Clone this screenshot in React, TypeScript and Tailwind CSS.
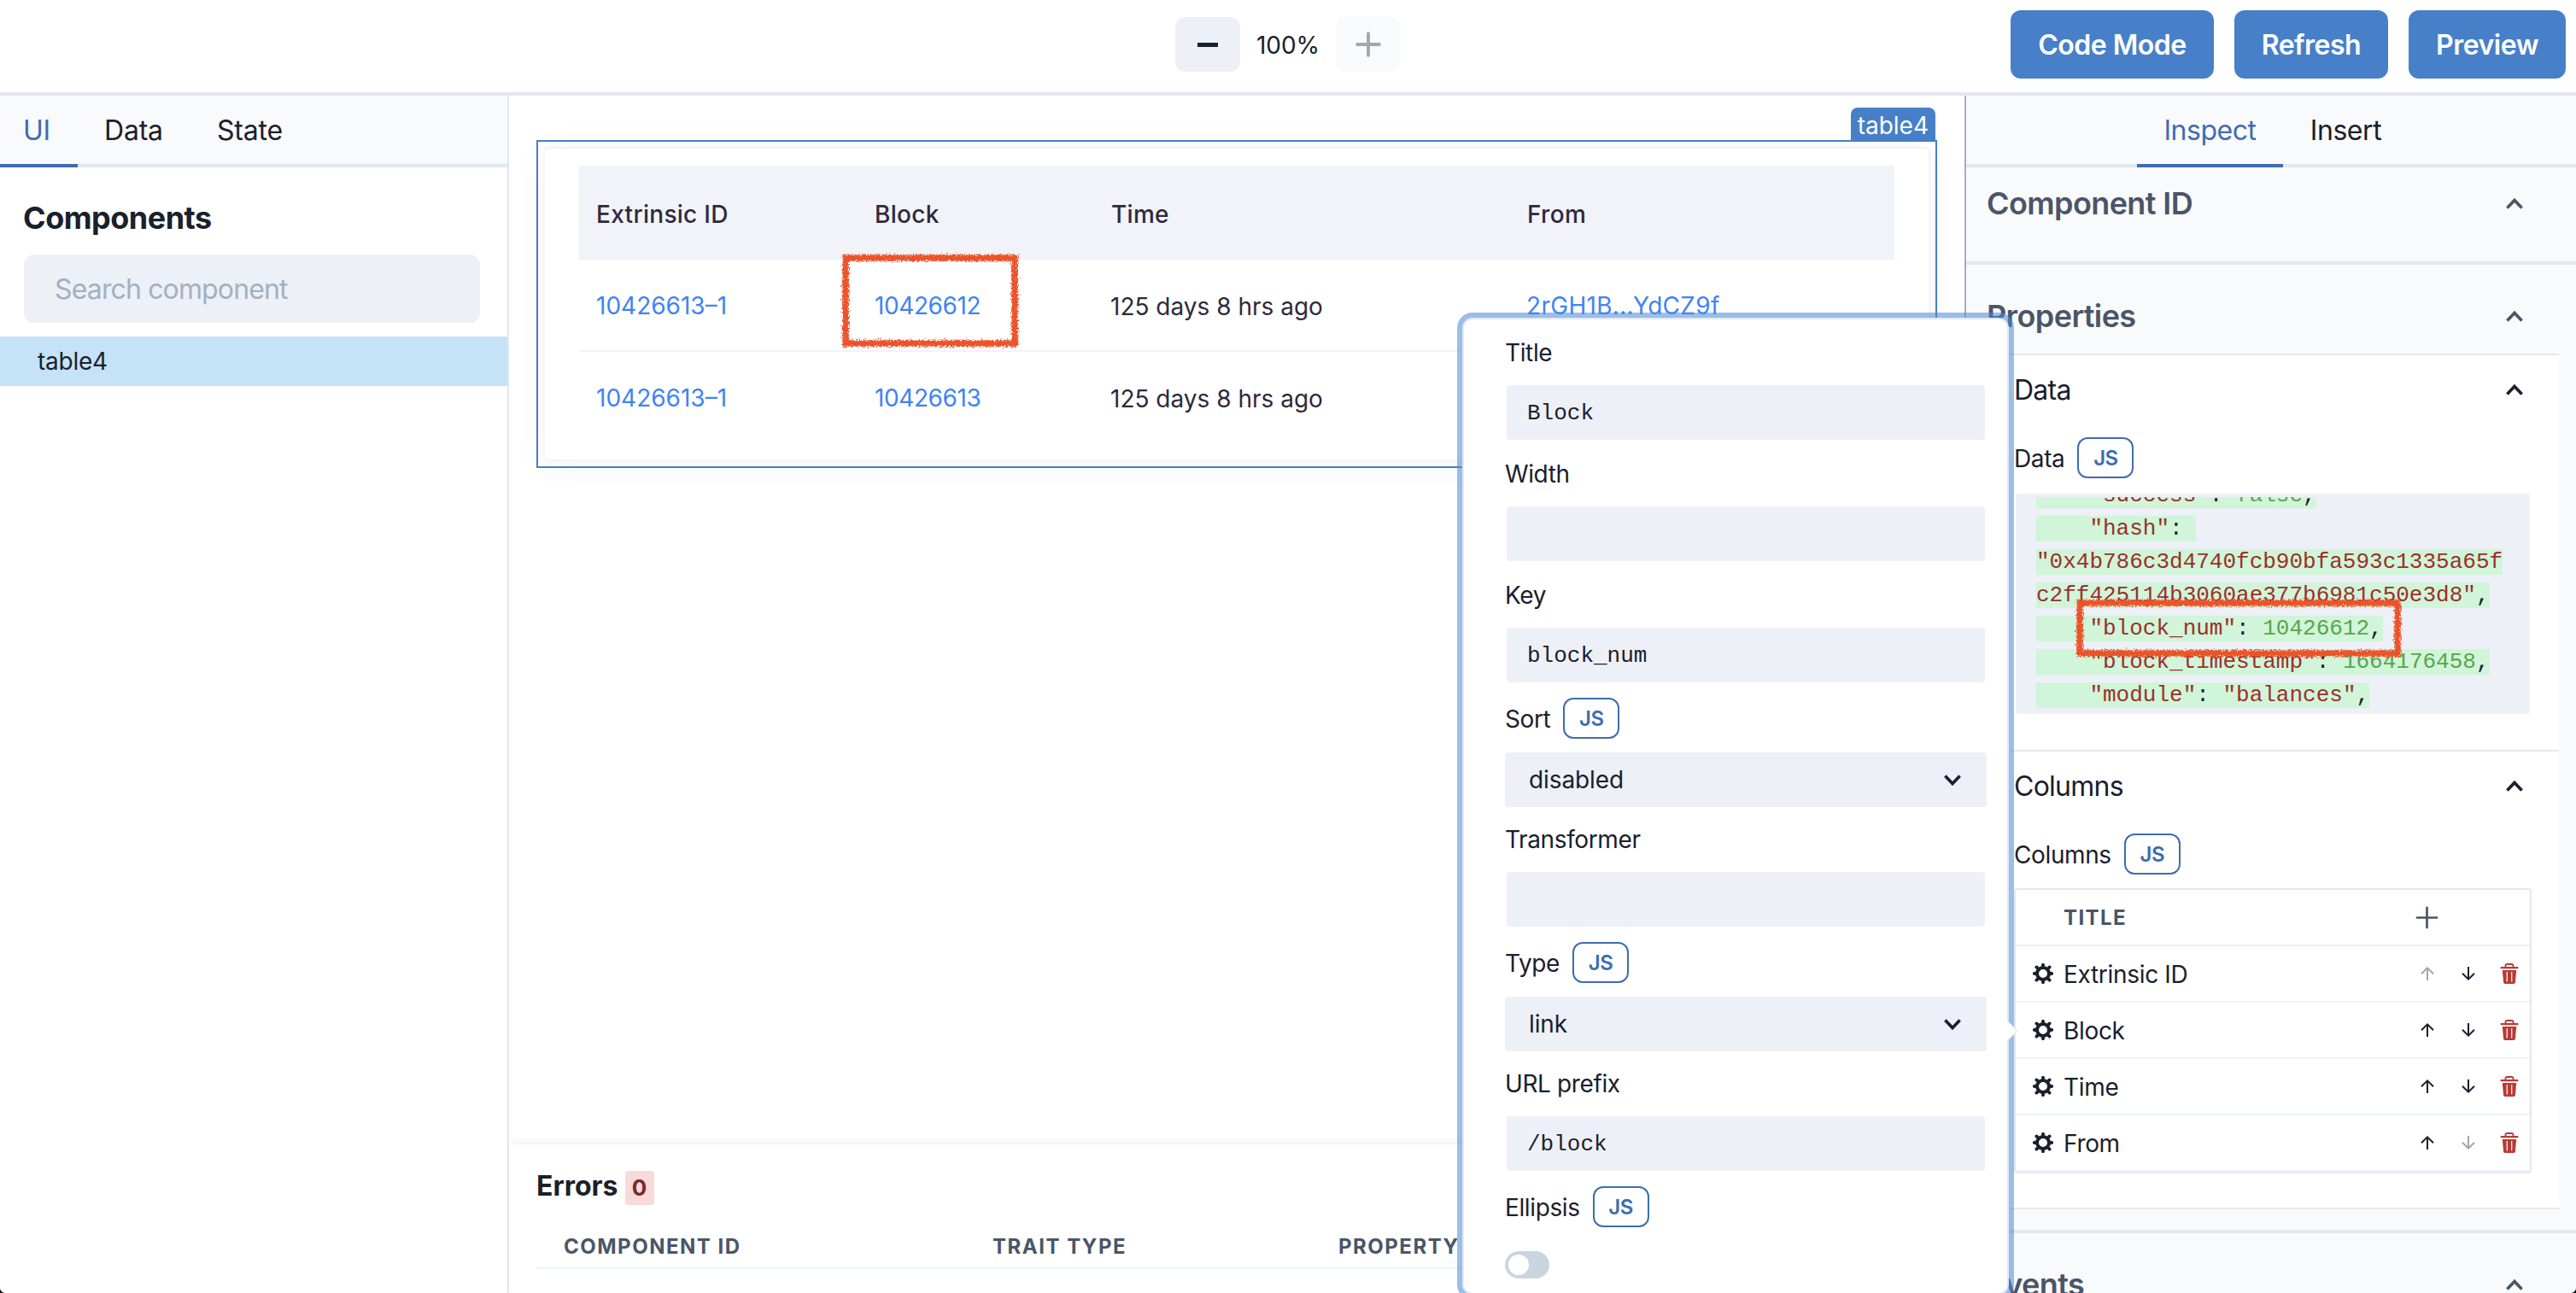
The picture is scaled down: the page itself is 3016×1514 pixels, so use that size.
import { ReactNode } from "react";
import clsx from "clsx";

const tableRows = [
  { id: "10426613–1", block: "10426612", time: "125 days 8 hrs ago", from: "2rGH1B...YdCZ9f" },
  { id: "10426613–1", block: "10426613", time: "125 days 8 hrs ago", from: "" },
];

const columns = ["Extrinsic ID", "Block", "Time", "From"];

function Chevron({ down, className }: { down?: boolean; className?: string }) {
  return (
    <svg width="20" height="13" viewBox="0 0 20 13" fill="none" className={clsx(down && "rotate-180", className)}>
      <path d="M1.4 11.4 L10 2.4 L18.6 11.4" stroke="currentColor" strokeWidth="3.6" />
    </svg>
  );
}

function GearIcon() {
  return (
    <svg width="24" height="24" viewBox="0 0 24 24" fill="none" stroke="currentColor">
      <circle cx="12" cy="12" r="7" strokeWidth="4" />
      <path
        d="M12 1.8V5 M12 19V22.2 M1.8 12H5 M19 12H22.2 M4.4 4.4L7 7 M17 17L19.6 19.6 M4.4 19.6L7 17 M17 7L19.6 4.4"
        strokeWidth="3.8"
        strokeLinecap="round"
      />
    </svg>
  );
}

function ArrowIcon({ down, disabled }: { down?: boolean; disabled?: boolean }) {
  return (
    <svg
      width="16"
      height="16"
      viewBox="0 0 16 16"
      fill="none"
      stroke="currentColor"
      strokeWidth="2"
      className={clsx(down && "rotate-180", disabled && "text-[#a4a5a9]")}
    >
      <path d="M8 16V1.5 M1 8.2L8 1.4L15 8.2" />
    </svg>
  );
}

function TrashIcon() {
  return (
    <svg width="22" height="24" viewBox="0 0 22 24" fill="none" className="text-[#b83a34]">
      <path d="M6.5 4V2.8Q6.5 1 8.3 1H13.7Q15.5 1 15.5 2.8V4" stroke="currentColor" strokeWidth="1.8" />
      <rect x="0.5" y="4" width="21" height="2.2" rx="1" fill="currentColor" />
      <path d="M2.8 8H19.2L17.9 22.2Q17.7 24 16 24H6Q4.3 24 4.1 22.2Z" fill="currentColor" />
      <path d="M8.3 10V21.5 M13.7 10V21.5" stroke="#f7dedd" strokeWidth="1.4" />
    </svg>
  );
}

function PlusIcon({ size, stroke }: { size: number; stroke: number }) {
  return (
    <svg width={size} height={size} viewBox="0 0 28 28" stroke="currentColor" strokeWidth={stroke} strokeLinecap="round">
      <path d="M14 2V26 M2 14H26" />
    </svg>
  );
}

function JsButton() {
  return (
    <button className="flex h-12 w-[66px] items-center justify-center rounded-xl border-[2.5px] border-[#3e6db0] pt-0.5 text-2xl font-semibold tracking-[-0.5px] text-[#3e6db0]">
      JS
    </button>
  );
}

function Label({ children, js }: { children: ReactNode; js?: boolean }) {
  return (
    <div className={clsx("flex items-center gap-[15px]", js ? "h-12" : "h-[42px]")}>
      <span className="pt-px text-[28px] tracking-[-0.38px]">{children}</span>
      {js && <JsButton />}
    </div>
  );
}

function Editor({ value }: { value: string }) {
  return (
    <div className="mx-0.5 my-[18px] flex h-16 items-center rounded bg-[#edf0f6] px-6 pt-0.5 font-['Liberation_Mono',monospace] text-[26px]">
      {value}
    </div>
  );
}

function Select({ value }: { value: string }) {
  return (
    <div className="my-4 flex h-16 items-center justify-between rounded bg-[#edf0f6] pr-[30px] pl-7 text-[28px] tracking-[-0.1px]">
      {value}
      <Chevron down />
    </div>
  );
}

function CodeLine({ children }: { children: ReactNode }) {
  return (
    <div className="h-[39px] leading-[39px] whitespace-pre">
      <span className="bg-[#d0f5d8]">{children}</span>
    </div>
  );
}

function Str({ children }: { children: ReactNode }) {
  return <span className="text-[#9c2f2a]">{children}</span>;
}

function Num({ children }: { children: ReactNode }) {
  return <span className="text-[#58a64c]">{children}</span>;
}

function HeaderButton({ children }: { children: ReactNode }) {
  return (
    <button className="h-20 rounded-xl bg-[#4780c8] px-8 pt-0.5 text-[32px] font-semibold tracking-[-0.5px] text-white">
      {children}
    </button>
  );
}

// hand drawn marker box
function Marker({ width, height, className }: { width: number; height: number; className: string }) {
  return (
    <svg width={width} height={height} className={clsx("pointer-events-none absolute overflow-visible", className)}>
      <filter id="rough" x="-10%" y="-10%" width="120%" height="120%">
        <feTurbulence type="fractalNoise" baseFrequency="0.6" numOctaves="2" seed="4" result="noise" />
        <feDisplacementMap in="SourceGraphic" in2="noise" scale="8" xChannelSelector="R" yChannelSelector="G" />
      </filter>
      <rect
        x="4"
        y="4"
        width={width - 8}
        height={height - 8}
        fill="none"
        stroke="#ec5229"
        strokeWidth="7.5"
        filter="url(#rough)"
      />
    </svg>
  );
}

function Header() {
  return (
    <header className="grid h-28 grid-cols-[1fr_auto_1fr] items-center border-b-4 border-[#e2e8f0] pb-1">
      <div />
      <div className="flex items-center">
        <button className="flex h-16 w-[76px] items-center justify-center rounded-xl bg-[#edf0f6]">
          <span className="h-[5px] w-6 bg-[#1a202c]" />
        </button>
        <span className="w-28 pt-px text-center text-[28px]">100%</span>
        <button className="flex h-16 w-[76px] items-center justify-center rounded-xl bg-[#f9fafc] text-[#a5a6a9]">
          <PlusIcon size={30} stroke={3.6} />
        </button>
      </div>
      <div className="flex justify-end gap-6 pr-3">
        <HeaderButton>Code Mode</HeaderButton>
        <HeaderButton>Refresh</HeaderButton>
        <HeaderButton>Preview</HeaderButton>
      </div>
    </header>
  );
}

function ComponentTree() {
  return (
    <aside className="w-[596px] shrink-0 border-r-2 border-[#e2e8f0]">
      <nav className="flex h-[84px] border-b-4 border-[#e2e8f0] bg-[#f9fafc] text-[32px] leading-[82px] tracking-[-0.2px]">
        <span className="h-[84px] w-[91px] border-b-4 border-[#3e6db0] pl-[27px] text-[#3e6db0]">UI</span>
        <span className="w-[131px] pl-[31px]">Data</span>
        <span className="pl-8">State</span>
      </nav>
      <h2 className="mt-8 pl-[27px] text-4xl leading-[54px] font-bold tracking-[-0.5px]">Components</h2>
      <div className="mt-4 ml-7 flex h-20 w-[534px] items-center rounded-xl bg-[#edf0f6] px-9 pt-0.5 text-[32px] tracking-[-0.86px] text-[#a3b0c2]">
        Search component
      </div>
      <div className="mt-4 h-[58px] bg-[#c5e2f7] pl-11 text-[28px] leading-[59px] tracking-[-0.25px]">table4</div>
    </aside>
  );
}

function Canvas() {
  return (
    <div className="flex-1 px-8 pt-[52px]">
      <div className="relative h-96 w-[1640px] border-2 border-[#4780c8] p-1.5">
        <span className="absolute -top-10 right-0 h-[38px] rounded-t-lg bg-[#4780c8] px-2 text-[28px] leading-[42px] text-white">
          table4
        </span>
        <div className="rounded-md border-2 border-[#f3f4f9] px-10 py-5 text-[28px] text-[#2e2a3d] shadow-[0_4px_40px_rgba(0,0,0,0.05)]">
          <div className="grid h-[110px] grid-cols-[326px_277px_487px_450px] items-center bg-[#f2f3f9] pt-1 font-medium tracking-[0.3px]">
            {columns.map((name) => (
              <span key={name} className="pl-5">
                {name}
              </span>
            ))}
          </div>
          {tableRows.map((row, i) => (
            <div
              key={row.block}
              className={clsx(
                "grid grid-cols-[326px_277px_487px_450px] items-center text-[#3e83f8]",
                i === 0 ? "h-[108px] border-b-2 border-[#f2f3f9]" : "h-[106px]"
              )}
            >
              <span className="pt-px pl-5">{row.id}</span>
              <span className="pt-px pl-5 tracking-[-0.4px]">{row.block}</span>
              <span className="pt-[3px] pl-[19px] text-[#2e2a3d]">{row.time}</span>
              <span className="pt-px pl-[19px] tracking-[0.3px]">{row.from}</span>
            </div>
          ))}
        </div>
      </div>
    </div>
  );
}

function ErrorsPanel() {
  return (
    <section className="h-[174px] px-8 shadow-[0_-4px_8px_-2px_rgba(0,0,0,0.07)]">
      <div className="flex items-center pt-[26px] text-[32px] leading-10 font-bold">
        Errors
        <span className="mt-[5px] ml-2 h-10 w-[34px] rounded bg-[#f9d9da] text-center text-[26px] leading-10 text-[#7b2a26]">
          0
        </span>
      </div>
      <div className="mt-6 grid h-[51px] grid-cols-[502px_405px_1fr] items-center border-b-2 border-[#edf2f7] pl-8 text-2xl font-bold tracking-[1.5px] text-[#4a5568]">
        <span>COMPONENT ID</span>
        <span>TRAIT TYPE</span>
        <span>PROPERTY</span>
      </div>
    </section>
  );
}

function SectionTitle({ children }: { children: ReactNode }) {
  return (
    <div className="flex items-center justify-between pr-[62px] pl-6 text-4xl leading-[54px] font-semibold tracking-[-0.6px] text-[#4a5568]">
      {children}
      <Chevron />
    </div>
  );
}

function GroupTitle({ children }: { children: ReactNode }) {
  return (
    <div className="flex h-20 items-center justify-between pr-[42px] pl-8 text-[32px] tracking-[-0.75px]">
      <span className="pt-px">{children}</span>
      <Chevron />
    </div>
  );
}

function Inspector() {
  return (
    <aside className="h-[1402px] w-[716px] shrink-0 overflow-hidden border-l-2 border-[#a3b0c2] bg-[#f9fafc]">
      <nav className="flex h-[84px] border-b-4 border-[#e2e8f0] pl-[200px] text-[32px] leading-[82px] tracking-[-0.45px]">
        <span className="h-[84px] w-[171px] border-b-4 border-[#3e6db0] text-center text-[#3e6db0]">Inspect</span>
        <span className="w-[147px] text-center">Insert</span>
      </nav>
      <section className="h-[114px] border-b-4 border-[#e2e8f0] pt-[15px]">
        <SectionTitle>Component ID</SectionTitle>
      </section>
      <section className="border-b-4 border-[#e2e8f0] pt-[33px] pb-6">
        <SectionTitle>Properties</SectionTitle>
        <div className="mt-[17px] mr-5 ml-6 border-y-2 border-[#e2e8f0] bg-white">
          <div className="h-[464px] border-b-2 border-[#e2e8f0]">
            <GroupTitle>Data</GroupTitle>
            <div className="pt-4 pr-8 pl-8">
              <Label js>Data</Label>
              <div className="mt-[18px] ml-0.5 h-[258px] w-[602px] rounded bg-[#edf0f6] px-6 py-1 font-['Liberation_Mono',monospace] text-[26px]">
                <div className="h-[250px] overflow-hidden">
                  <div className="-mt-[21px]">
                    <CodeLine>
                      <Str>{'    "success"'}</Str>: <Num>false</Num>,
                    </CodeLine>
                    <CodeLine>
                      <Str>{'    "hash"'}</Str>{": "}
                    </CodeLine>
                    <CodeLine>
                      <Str>{'"0x4b786c3d4740fcb90bfa593c1335a65f'}</Str>
                    </CodeLine>
                    <CodeLine>
                      <Str>{'c2ff425114b3060ae377b6981c50e3d8"'}</Str>,
                    </CodeLine>
                    <CodeLine>
                      <Str>{'    "block_num"'}</Str>: <Num>10426612</Num>,
                    </CodeLine>
                    <CodeLine>
                      <Str>{'    "block_timestamp"'}</Str>: <Num>1664176458</Num>,
                    </CodeLine>
                    <CodeLine>
                      <Str>{'    "module"'}</Str>: <Str>{'"balances"'}</Str>,
                    </CodeLine>
                  </div>
                </div>
              </div>
            </div>
          </div>
          <div className="h-[534px]">
            <GroupTitle>Columns</GroupTitle>
            <div className="pt-4 pl-8">
              <Label js>Columns</Label>
              <div className="mt-4 w-[606px] rounded border-2 border-[#e2e8f0]">
                <div className="flex h-[66px] items-center justify-between border-b-2 border-[#edf2f7] pr-[107px] pl-[56px] text-2xl font-bold tracking-[1.4px] text-[#4a5568]">
                  <span className="pt-px">TITLE</span>
                  <PlusIcon size={27} stroke={2.8} />
                </div>
                {columns.map((name, i) => (
                  <div key={name} className="flex h-[66px] items-center border-b-2 border-[#edf2f7] pl-5 text-[28px] tracking-[-0.32px]">
                    <GearIcon />
                    <span className="flex-1 pt-px pl-3">{name}</span>
                    <div className="flex items-center gap-8 pr-[13px]">
                      <ArrowIcon disabled={i === 0} />
                      <ArrowIcon down disabled={i === columns.length - 1} />
                      <span className="-ml-[3px]">
                        <TrashIcon />
                      </span>
                    </div>
                  </div>
                ))}
              </div>
            </div>
          </div>
        </div>
      </section>
      <section className="pt-[33px]">
        <SectionTitle>Events</SectionTitle>
      </section>
    </aside>
  );
}

function ColumnPopover() {
  return (
    <div className="absolute top-[372px] left-[1712px] h-[1144px] w-[640px] rounded-xl border-2 border-[#e2e8f0] bg-white pt-[17px] pr-6 pl-12 shadow-[0_0_0_6px_rgba(72,136,214,0.55)]">
      <Label>Title</Label>
      <Editor value="Block" />
      <Label>Width</Label>
      <Editor value="" />
      <Label>Key</Label>
      <Editor value="block_num" />
      <Label js>Sort</Label>
      <Select value="disabled" />
      <Label>Transformer</Label>
      <Editor value="" />
      <Label js>Type</Label>
      <Select value="link" />
      <Label>URL prefix</Label>
      <Editor value="/block" />
      <Label js>Ellipsis</Label>
      <div className="mt-7 flex h-8 w-[52px] items-center rounded-full bg-[#cbd5e0] px-1">
        <span className="size-6 rounded-full bg-white" />
      </div>
      <span className="absolute top-[825px] left-[629px] size-4 rotate-45 border-t border-r border-[#e2e8f0] bg-white" />
    </div>
  );
}

export default function App() {
  return (
    <div className="relative flex h-[1514px] w-[3016px] flex-col overflow-hidden bg-white font-['Inter',sans-serif] text-[#1a202c]">
      <Header />
      <div className="flex min-h-0 flex-1">
        <ComponentTree />
        <main className="flex min-w-0 flex-1 flex-col">
          <Canvas />
          <ErrorsPanel />
        </main>
        <Inspector />
      </div>
      <ColumnPopover />
      <Marker width={206} height={108} className="top-[298px] left-[986px]" />
      <Marker width={380} height={67} className="top-[702px] left-[2431px]" />
      <svg width="5" height="5" className="absolute bottom-0 left-0">
        <path d="M0 0Q1 4 5 5H0Z" />
      </svg>
      <svg width="5" height="5" className="absolute right-0 bottom-0">
        <path d="M5 0Q4 4 0 5H5Z" />
      </svg>
    </div>
  );
}
